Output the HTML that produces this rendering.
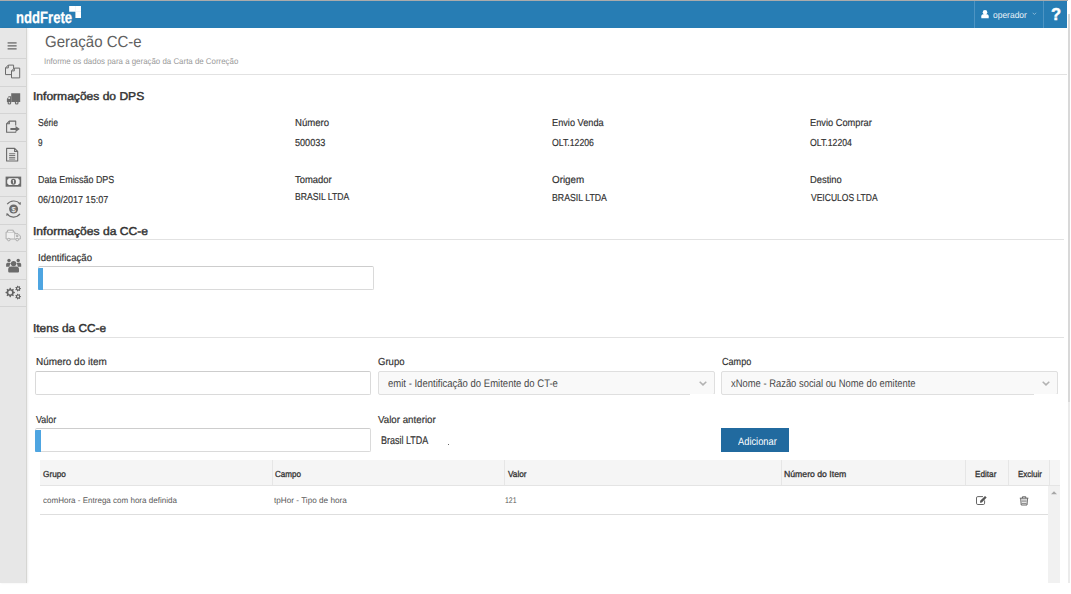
<!DOCTYPE html>
<html lang="pt-BR">
<head>
<meta charset="utf-8">
<title>Geração CC-e</title>
<style>
*{box-sizing:border-box;margin:0;padding:0}
html,body{width:1071px;height:594px;overflow:hidden;background:#fff}
body{position:relative;font-family:"Liberation Sans",sans-serif;color:#333;font-size:10px}
.abs{position:absolute}
.t{position:absolute;white-space:nowrap;line-height:1;transform-origin:0 0;text-rendering:geometricPrecision}
#topline{left:0;top:0;width:1068px;height:1px;background:#ababab}
#hdr{left:0;top:1px;width:1067px;height:26.5px;background:#277db4}
#side{left:0;top:27.5px;width:27px;height:555.5px;background:#e7e7e7;border-right:1px solid #d6d6d3;box-shadow:1px 0 2px rgba(0,0,0,0.07)}
.sep{position:absolute;left:0;width:26px;height:1px;background:#d4d4d4}
.hr{position:absolute;height:1px;background:#e2e2e2}
.inp{position:absolute;background:#fff;border:1px solid #dadada;border-top-color:#cdcdcd;border-radius:2px}
.sel{position:absolute;background:#f9f9f9;border:1px solid #dfdfdf;border-radius:2px}
.bar{position:absolute;background:#4ea5e1;border-radius:1px 0 0 1px}
.vsep{position:absolute;top:460px;width:1px;height:25px;background:#e6e6e6}
svg{position:absolute;overflow:visible}
</style>
</head>
<body>
<div class="abs" id="topline"></div>
<div class="abs" id="hdr"></div>
<svg style="left:69px;top:6px" width="12" height="12" viewBox="0 0 12 12"><rect x="0.15" y="0" width="11.85" height="5.7" fill="#fff"/><rect x="6.4" y="0" width="5.6" height="12" fill="#fff"/><rect x="6.1" y="0" width="0.45" height="5.7" fill="#dbe8f2"/><rect x="6.5" y="5.5" width="5.5" height="0.45" fill="#dbe8f2"/></svg>
<div class="abs" style="left:974px;top:1px;width:1px;height:26.5px;background:#4d94c3"></div>
<div class="abs" style="left:1043px;top:1px;width:1px;height:26.5px;background:#4d94c3"></div>
<svg style="left:981px;top:9.6px" width="8" height="9" viewBox="0 0 8 9"><circle cx="4" cy="2.2" r="2.25" fill="#fff"/><path d="M0.3 8.3V6.2C0.3 4.8 1.5 4 4 4S7.7 4.8 7.7 6.2V8.3Z" fill="#fff"/></svg>
<svg style="left:1031.5px;top:12.3px" width="5" height="4" viewBox="0 0 5 4"><path d="M0.7 0.8L2.4 2.5L4.1 0.8" fill="none" stroke="#9cc4de" stroke-width="0.8"/></svg>

<div class="abs" id="side"></div>
<!--SIDE--><div class="sep" style="top:58px"></div>
<div class="sep" style="top:86px"></div>
<div class="sep" style="top:113px"></div>
<div class="sep" style="top:141px"></div>
<div class="sep" style="top:168px"></div>
<div class="sep" style="top:196px"></div>
<div class="sep" style="top:224px"></div>
<div class="sep" style="top:251px"></div>
<div class="sep" style="top:279px"></div>
<div class="sep" style="top:306px"></div>
<svg style="left:0;top:0" width="27" height="594" viewBox="0 0 27 594">
<g fill="#5a5a5a"><rect x="7.6" y="42.35" width="9" height="1.15"/><rect x="7.6" y="45.3" width="9" height="1.15"/><rect x="7.6" y="48.3" width="9" height="1.15"/></g>
<g fill="#e7e7e7" stroke="#6b6b6b" stroke-width="1" stroke-linejoin="round">
<path d="M8.3 65.1H13.6V74.6H5.5V67.9Z"/><path d="M8.3 65.1V67.9H5.5" fill="none"/>
<path d="M14.3 68.1H19.7V77.9H11.5V70.9Z"/><path d="M14.3 68.1V70.9H11.5" fill="none"/>
</g>
<g fill="#6b6b6b">
<path d="M11.2 93.2H20.2V102H11.2ZM11 96.3H8.6L6.9 98.9V102H11Z"/>
<circle cx="9.4" cy="102.7" r="1.9"/><circle cx="16.7" cy="102.7" r="1.9"/>
<circle cx="9.4" cy="102.7" r="0.8" fill="#e7e7e7"/><circle cx="16.7" cy="102.7" r="0.8" fill="#e7e7e7"/>
<rect x="8.3" y="97.3" width="1.8" height="1.6" fill="#e7e7e7"/>
</g>
<g fill="none" stroke="#6b6b6b" stroke-width="1.1" stroke-linejoin="round">
<path d="M15.7 125.5V121.1H9.3L6.6 123.8V132.2H15.7V131.6"/><path d="M9.3 121.1V123.8H6.6"/>
</g>
<path d="M10.4 128.1H15.6V126L19.8 129L15.6 132V129.9H10.4Z" fill="#6b6b6b"/>
<g fill="none" stroke="#6b6b6b" stroke-width="1.1" stroke-linejoin="round">
<path d="M6.6 148.4H14.6L17.7 151.5V161H6.6Z"/><path d="M14.6 148.4V151.5H17.7"/>
</g>
<g fill="#6b6b6b"><rect x="9.1" y="153.3" width="6.1" height="0.9"/><rect x="9.1" y="155.1" width="6.1" height="0.9"/><rect x="9.1" y="156.9" width="6.1" height="0.9"/><rect x="9.1" y="158.6" width="6.1" height="0.9"/></g>
<rect x="5.6" y="176.6" width="15.6" height="10.1" fill="#6b6b6b"/>
<path d="M8.6 178.3H18.2A1.5 1.5 0 0 0 19.6 179.7V183.6A1.5 1.5 0 0 0 18.2 185H8.6A1.5 1.5 0 0 0 7.2 183.6V179.7A1.5 1.5 0 0 0 8.6 178.3Z" fill="#f2f2f2"/>
<ellipse cx="13.4" cy="181.65" rx="2.6" ry="3" fill="#6b6b6b"/>
<path d="M12.6 180.6L13.5 179.9H14V183.5H13.1V181L12.6 181.3Z" fill="#f2f2f2"/>
<circle cx="13.6" cy="209" r="4.5" fill="#6b6b6b"/>
<text x="13.6" y="211.7" font-family="Liberation Sans, sans-serif" font-size="7.6" fill="#fff" text-anchor="middle">$</text>
<g fill="none" stroke="#6b6b6b" stroke-width="1.15">
<path d="M7.2 204.2A8.5 8.5 0 0 1 20 203.6"/><path d="M20 213.9A8.5 8.5 0 0 1 7.2 214.4"/>
</g>
<path d="M20.9 201.9L20.6 205L18.1 203.7Z" fill="#6b6b6b"/><path d="M6.3 216L6.6 212.9L9.1 214.2Z" fill="#6b6b6b"/>
<g fill="#f0f0f0" stroke="#a6a6a6" stroke-width="0.9" stroke-linejoin="round">
<path d="M6.1 232H14.8V239H6.1Z"/><path d="M7.6 232V230.2H13.3V232"/><path d="M14.8 233.7H18L20.3 236V239H14.8"/><path d="M16.3 235.2H18V236.6H16.3Z"/>
<circle cx="8.8" cy="239.6" r="1.3" fill="#e7e7e7"/><circle cx="17.2" cy="239.6" r="1.3" fill="#e7e7e7"/>
</g>
<g fill="#6b6b6b">
<circle cx="9" cy="260.5" r="1.7"/><circle cx="18.2" cy="260.5" r="1.7"/>
<path d="M6.1 266.8V264.6C6.1 263.3 6.9 262.7 8.2 262.7H9.6C10.2 262.7 10.6 262.9 10.9 263.2C10 264 9.6 265 9.6 266.8Z"/>
<path d="M21.2 266.8V264.6C21.2 263.3 20.4 262.7 19.1 262.7H17.7C17.1 262.7 16.7 262.9 16.4 263.2C17.3 264 17.7 265 17.7 266.8Z"/>
<circle cx="13.6" cy="263.6" r="2.7"/>
<path d="M8.2 271.3V269.4C8.2 267.6 9.4 266.6 11.2 266.6H16C17.8 266.6 19 267.6 19 269.4V271.3C19 272.1 18.5 272.5 17.7 272.5H9.5C8.7 272.5 8.2 272.1 8.2 271.3Z"/>
</g>
<path d="M14.88 292.04L14.88 292.96L13.55 293.52L13.29 294.15L13.83 295.48L13.18 296.13L11.85 295.59L11.22 295.85L10.66 297.18L9.74 297.18L9.18 295.85L8.55 295.59L7.22 296.13L6.57 295.48L7.11 294.15L6.85 293.52L5.52 292.96L5.52 292.04L6.85 291.48L7.11 290.85L6.57 289.52L7.22 288.87L8.55 289.41L9.18 289.15L9.74 287.82L10.66 287.82L11.22 289.15L11.85 289.41L13.18 288.87L13.83 289.52L13.29 290.85L13.55 291.48ZM8.30 292.50A1.9 1.9 0 1 0 12.10 292.50A1.9 1.9 0 1 0 8.30 292.50Z" fill="#636363" fill-rule="evenodd"/><path d="M20.98 288.28L20.98 288.92L20.08 289.29L19.88 289.72L20.15 290.65L19.64 291.06L18.79 290.58L18.34 290.69L17.78 291.48L17.14 291.34L16.98 290.38L16.62 290.08L15.64 290.14L15.36 289.56L16.01 288.84L16.01 288.36L15.36 287.64L15.64 287.06L16.62 287.12L16.98 286.82L17.14 285.86L17.78 285.72L18.34 286.51L18.79 286.62L19.64 286.14L20.15 286.55L19.88 287.48L20.08 287.91ZM17.10 288.60A1.0 1.0 0 1 0 19.10 288.60A1.0 1.0 0 1 0 17.10 288.60Z" fill="#636363" fill-rule="evenodd"/><path d="M20.98 296.28L20.98 296.92L20.08 297.29L19.88 297.72L20.15 298.65L19.64 299.06L18.79 298.58L18.34 298.69L17.78 299.48L17.14 299.34L16.98 298.38L16.62 298.08L15.64 298.14L15.36 297.56L16.01 296.84L16.01 296.36L15.36 295.64L15.64 295.06L16.62 295.12L16.98 294.82L17.14 293.86L17.78 293.72L18.34 294.51L18.79 294.62L19.64 294.14L20.15 294.55L19.88 295.48L20.08 295.91ZM17.10 296.60A1.0 1.0 0 1 0 19.10 296.60A1.0 1.0 0 1 0 17.10 296.60Z" fill="#636363" fill-rule="evenodd"/>
</svg><!--/SIDE-->
<div class="abs" style="left:1068px;top:14px;width:2px;height:388px;background:#d8d8d8"></div>
<div class="abs" style="left:1068px;top:402px;width:2px;height:181px;background:#ebebeb"></div>

<div class="hr" style="left:30.5px;top:74px;width:1036.5px"></div>
<div class="hr" style="left:34px;top:239px;width:1030px"></div>
<div class="inp" style="left:38px;top:266px;width:336px;height:24px"></div>
<div class="bar" style="left:38px;top:267.5px;width:5px;height:22px"></div>
<div class="hr" style="left:34px;top:337px;width:1030px"></div>

<div class="inp" style="left:35px;top:371px;width:336px;height:24px"></div>
<div class="sel" style="left:378px;top:371px;width:337px;height:24px"></div>
<div class="abs" style="left:690px;top:394px;width:26px;height:2px;background:#fff"></div>
<svg style="left:698.6px;top:381.1px" width="8" height="5" viewBox="0 0 8 5"><path d="M0.7 0.7L4 3.9L7.3 0.7" fill="none" stroke="#b2b2b2" stroke-width="1.5"/></svg>
<div class="sel" style="left:721px;top:371px;width:337px;height:24px"></div>
<div class="abs" style="left:1033.5px;top:394px;width:26px;height:2px;background:#fff"></div>
<svg style="left:1041.5px;top:381.1px" width="8" height="5" viewBox="0 0 8 5"><path d="M0.7 0.7L4 3.9L7.3 0.7" fill="none" stroke="#b2b2b2" stroke-width="1.5"/></svg>

<div class="inp" style="left:35px;top:428px;width:336px;height:24px"></div>
<div class="bar" style="left:35px;top:429.5px;width:5.5px;height:22px"></div>
<div class="abs" style="left:448.3px;top:444.3px;width:1.2px;height:1.2px;background:#666"></div>
<div class="abs" id="btn" style="left:721px;top:428px;width:68px;height:24px;background:#216a9f"></div>

<div class="abs" id="thead" style="left:40px;top:460px;width:1020.4px;height:26px;background:#f5f5f5;border-bottom:1px solid #e4e4e4"></div>
<div class="vsep" style="left:271.5px"></div>
<div class="vsep" style="left:503.5px"></div>
<div class="vsep" style="left:780.5px"></div>
<div class="vsep" style="left:964.5px"></div>
<div class="vsep" style="left:1008px"></div>
<div class="vsep" style="left:1049px"></div>
<div class="hr" style="left:40px;top:514px;width:1008px;background:#dedede"></div>
<div class="abs" id="sbar" style="left:1048px;top:486px;width:12.4px;height:96.5px;background:#f1f1f1"></div>
<svg style="left:1051.2px;top:491px" width="6" height="3.5" viewBox="0 0 6 3.5"><path d="M0 3.2L3 0.3L6 3.2Z" fill="#a6a6a6"/></svg>
<!--ICONS--><svg style="left:0;top:0" width="1071" height="594" viewBox="0 0 1071 594">
<g fill="none" stroke="#555" stroke-width="0.9" stroke-linejoin="round" stroke-linecap="round">
<path d="M984.6 500.8V503.2A1.3 1.3 0 0 1 983.3 504.5H977.8A1.3 1.3 0 0 1 976.5 503.2V497.9A1.3 1.3 0 0 1 977.8 496.6H982.6"/>
</g>
<path d="M980.2 500.7L985 495.9L986.7 497.6L981.9 502.4L980 502.7Z" fill="#555"/>
<g fill="none" stroke="#555" stroke-width="0.9" stroke-linejoin="round">
<path d="M1019.8 498.2H1028.4"/><path d="M1022.4 498.2V496.8H1025.8V498.2"/><path d="M1020.7 498.4L1021.2 505H1027L1027.5 498.4"/>
</g>
<g fill="#777"><rect x="1021.6" y="499.7" width="5" height="0.8"/><rect x="1021.6" y="501.4" width="5" height="0.8"/><rect x="1021.6" y="503.1" width="5" height="0.8"/></g>
</svg><!--/ICONS-->
<div class="t" id="logo" style="left:16.00px;top:10px;font-size:16.4px;color:#fff;transform:scaleX(0.8000);font-weight:bold;-webkit-text-stroke:0.25px #fff">nddFrete</div>
<div class="t" id="oper" style="left:992.90px;top:11px;font-size:8.9px;color:#e9f1f7;transform:scaleX(0.9530)">operador</div>
<div class="t" id="help" style="left:1051.40px;top:6px;font-size:17.2px;color:#fff;transform:scaleX(0.9600);font-weight:bold;-webkit-text-stroke:0.5px #fff">?</div>
<div class="t" id="title" style="left:44.50px;top:35px;font-size:16px;color:#606060;transform:scaleX(0.9375)">Geração CC-e</div>
<div class="t" id="sub" style="left:44.30px;top:57px;font-size:8.3px;color:#9a9a9a;transform:scaleX(0.9511)">Informe os dados para a geração da Carta de Correção</div>
<div class="t" id="h_dps" style="left:33.46px;top:92px;font-size:11.4px;color:#333;transform:scaleX(1.0580);-webkit-text-stroke:0.45px #333">Informações do DPS</div>
<div class="t" id="l_serie" style="left:37.69px;top:119px;font-size:10.1px;color:#333;transform:scaleX(0.8484);-webkit-text-stroke:0.18px #333">Série</div>
<div class="t" id="v_serie" style="left:37.69px;top:139px;font-size:10.1px;color:#333;transform:scaleX(0.8033);-webkit-text-stroke:0.18px #333">9</div>
<div class="t" id="l_num" style="left:295.19px;top:119px;font-size:10.1px;color:#333;transform:scaleX(0.9513);-webkit-text-stroke:0.18px #333">Número</div>
<div class="t" id="v_num" style="left:295.19px;top:139px;font-size:10.1px;color:#333;transform:scaleX(0.9017);-webkit-text-stroke:0.18px #333">500033</div>
<div class="t" id="l_ev" style="left:552.49px;top:119px;font-size:10.1px;color:#333;transform:scaleX(0.9115);-webkit-text-stroke:0.18px #333">Envio Venda</div>
<div class="t" id="v_ev" style="left:552.49px;top:139px;font-size:10.1px;color:#333;transform:scaleX(0.8613);-webkit-text-stroke:0.18px #333">OLT.12206</div>
<div class="t" id="l_ec" style="left:810.19px;top:119px;font-size:10.1px;color:#333;transform:scaleX(0.9186);-webkit-text-stroke:0.18px #333">Envio Comprar</div>
<div class="t" id="v_ec" style="left:810.19px;top:139px;font-size:10.1px;color:#333;transform:scaleX(0.8613);-webkit-text-stroke:0.18px #333">OLT.12204</div>
<div class="t" id="l_data" style="left:37.69px;top:176px;font-size:10.1px;color:#333;transform:scaleX(0.8819);-webkit-text-stroke:0.18px #333">Data Emissão DPS</div>
<div class="t" id="v_data" style="left:37.69px;top:196px;font-size:10.1px;color:#333;transform:scaleX(0.8930);-webkit-text-stroke:0.18px #333">06/10/2017 15:07</div>
<div class="t" id="l_tom" style="left:295.19px;top:176px;font-size:10.1px;color:#333;transform:scaleX(0.9351);-webkit-text-stroke:0.18px #333">Tomador</div>
<div class="t" id="v_tom" style="left:295.19px;top:193px;font-size:10.1px;color:#333;transform:scaleX(0.8546);-webkit-text-stroke:0.18px #333">BRASIL LTDA</div>
<div class="t" id="l_ori" style="left:552.49px;top:176px;font-size:10.1px;color:#333;transform:scaleX(0.9736);-webkit-text-stroke:0.18px #333">Origem</div>
<div class="t" id="v_ori" style="left:552.49px;top:194px;font-size:10.1px;color:#333;transform:scaleX(0.8656);-webkit-text-stroke:0.18px #333">BRASIL LTDA</div>
<div class="t" id="l_des" style="left:810.19px;top:176px;font-size:10.1px;color:#333;transform:scaleX(0.9280);-webkit-text-stroke:0.18px #333">Destino</div>
<div class="t" id="v_des" style="left:811.19px;top:194px;font-size:10.1px;color:#333;transform:scaleX(0.8440);-webkit-text-stroke:0.18px #333">VEICULOS LTDA</div>
<div class="t" id="h_cce" style="left:33.46px;top:227px;font-size:11.4px;color:#333;transform:scaleX(1.0621);-webkit-text-stroke:0.45px #333">Informações da CC-e</div>
<div class="t" id="l_ident" style="left:37.79px;top:254px;font-size:10.1px;color:#333;transform:scaleX(0.9537);-webkit-text-stroke:0.18px #333">Identificação</div>
<div class="t" id="h_itens" style="left:33.48px;top:324px;font-size:11.4px;color:#333;transform:scaleX(1.0409);-webkit-text-stroke:0.45px #333">Itens da CC-e</div>
<div class="t" id="l_nitem" style="left:35.59px;top:358px;font-size:10.1px;color:#333;transform:scaleX(0.9849);-webkit-text-stroke:0.18px #333">Número do item</div>
<div class="t" id="l_grupo" style="left:378.29px;top:358px;font-size:10.1px;color:#333;transform:scaleX(0.9466);-webkit-text-stroke:0.18px #333">Grupo</div>
<div class="t" id="st_grupo" style="left:388.00px;top:379px;font-size:11px;color:#484848;transform:scaleX(0.8657)">emit - Identificação do Emitente do CT-e</div>
<div class="t" id="l_campo" style="left:722.29px;top:358px;font-size:10.1px;color:#333;transform:scaleX(0.8996);-webkit-text-stroke:0.18px #333">Campo</div>
<div class="t" id="st_campo" style="left:731.40px;top:379px;font-size:11px;color:#484848;transform:scaleX(0.8553)">xNome - Razão social ou Nome do emitente</div>
<div class="t" id="l_valor" style="left:35.59px;top:416px;font-size:10.1px;color:#333;transform:scaleX(0.8835);-webkit-text-stroke:0.18px #333">Valor</div>
<div class="t" id="l_vant" style="left:378.29px;top:416px;font-size:10.1px;color:#333;transform:scaleX(0.9643);-webkit-text-stroke:0.18px #333">Valor anterior</div>
<div class="t" id="v_vant" style="left:381.49px;top:436px;font-size:11.2px;color:#333;transform:scaleX(0.8019);-webkit-text-stroke:0.18px #333">Brasil LTDA</div>
<div class="t" id="btn_t" style="left:737.80px;top:437px;font-size:10.7px;color:#fff;transform:scaleX(0.8712)">Adicionar</div>
<div class="t" id="th1" style="left:43.32px;top:470px;font-size:8.7px;color:#333;transform:scaleX(0.9484);-webkit-text-stroke:0.3px #333">Grupo</div>
<div class="t" id="th2" style="left:275.42px;top:470px;font-size:8.7px;color:#333;transform:scaleX(0.9285);-webkit-text-stroke:0.3px #333">Campo</div>
<div class="t" id="th3" style="left:507.82px;top:470px;font-size:8.7px;color:#333;transform:scaleX(0.9452);-webkit-text-stroke:0.3px #333">Valor</div>
<div class="t" id="th4" style="left:784.42px;top:470px;font-size:8.7px;color:#333;transform:scaleX(0.9986);-webkit-text-stroke:0.3px #333">Número do Item</div>
<div class="t" id="th5" style="left:975.12px;top:470px;font-size:8.7px;color:#333;transform:scaleX(0.9412);-webkit-text-stroke:0.3px #333">Editar</div>
<div class="t" id="th6" style="left:1017.72px;top:470px;font-size:8.7px;color:#333;transform:scaleX(0.9154);-webkit-text-stroke:0.3px #333">Excluir</div>
<div class="t" id="td1" style="left:43.10px;top:497px;font-size:8.2px;color:#5a5a5a;transform:scaleX(0.9805)">comHora - Entrega com hora definida</div>
<div class="t" id="td2" style="left:273.60px;top:497px;font-size:8.2px;color:#5a5a5a;transform:scaleX(0.9999)">tpHor - Tipo de hora</div>
<div class="t" id="td3" style="left:505.00px;top:497px;font-size:8.2px;color:#5a5a5a;transform:scaleX(0.8506)">121</div>
</body>
</html>
